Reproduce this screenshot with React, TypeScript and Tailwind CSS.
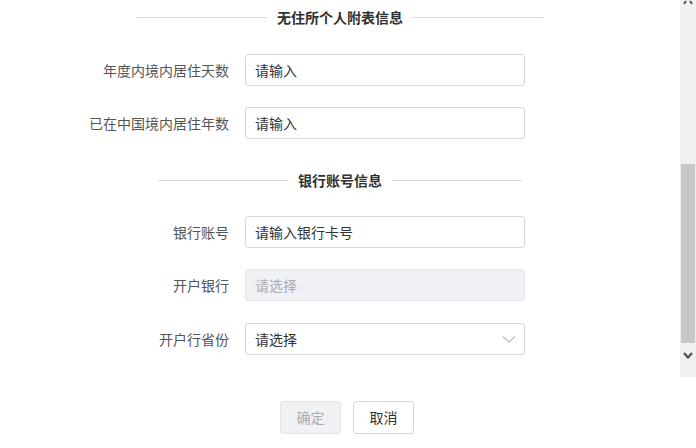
import React from 'react';

const font = { fontFamily: '"Noto Sans CJK SC", "Liberation Sans", sans-serif' };

interface SectionTitleProps {
  title: string;
  lineWidth: string;
}

const SectionTitle: React.FC<SectionTitleProps> = ({ title, lineWidth }) => (
  <div className="flex h-[34px] items-center justify-center gap-[10px]">
    <div className={`h-px ${lineWidth} bg-[#d9dae0]`} />
    <span className="text-[14px] font-bold leading-none text-[#303133]">{title}</span>
    <div className={`h-px ${lineWidth} bg-[#d9dae0]`} />
  </div>
);

interface FieldProps {
  label: string;
  value: string;
  disabled?: boolean;
  select?: boolean;
  className?: string;
}

const Field: React.FC<FieldProps> = ({ label, value, disabled, select, className }) => (
  <div className={`flex items-center ${className ?? ''}`}>
    <label className="w-[176px] pr-[16px] text-right text-[14px] leading-none text-[#555]">{label}</label>
    <div
      className={`relative flex h-[32px] w-[280px] items-center rounded-[3px] border px-[9px] text-[14px] leading-none ${
        disabled
          ? 'border-[#e4e6ec] bg-[#f0f1f5] text-[#a8abb2]'
          : 'border-[#d5d7de] bg-white text-[#333]'
      }`}
    >
      <span>{value}</span>
      {select && (
        <svg
          className="absolute right-[8px] top-[10px]"
          width="14"
          height="10"
          viewBox="0 0 14 10"
          fill="none"
        >
          <polyline points="1,2.5 7,8 13,2.5" stroke="#b8bcc6" strokeWidth="1.2" />
        </svg>
      )}
    </div>
  </div>
);

const Scrollbar: React.FC = () => (
  <div className="flex h-[377px] w-[16px] flex-col bg-[#f0f0f0]">
    <div className="flex h-[4px] justify-center overflow-hidden">
      <svg width="10" height="4" viewBox="0 0 10 4">
        <polyline points="1,4 3,1" stroke="#555" strokeWidth="2" fill="none" />
        <polyline points="9,4 7,1" stroke="#555" strokeWidth="2" fill="none" />
      </svg>
    </div>
    <div className="h-[160px]" />
    <div className="mx-[1px] h-[179px] bg-[#c8c8c8]" />
    <div className="flex flex-1 items-start justify-center pt-[9px]">
      <svg width="10" height="7" viewBox="0 0 10 7">
        <polyline points="1,1 5,5.5 9,1" stroke="#505050" strokeWidth="2.2" fill="none" />
      </svg>
    </div>
  </div>
);

export default function App() {
  return (
    <div className="flex h-[448px] w-[696px] bg-white" style={font}>
      <div className="flex-1">
        <SectionTitle title="无住所个人附表信息" lineWidth="w-[130px]" />
        <div className="pl-[69px]">
          <Field label="年度内境内居住天数" value="请输入" className="mt-[20px]" />
          <Field label="已在中国境内居住年数" value="请输入" className="mt-[21px]" />
        </div>
        <div className="mt-[24px]">
          <SectionTitle title="银行账号信息" lineWidth="w-[130px]" />
        </div>
        <div className="pl-[69px]">
          <Field label="银行账号" value="请输入银行卡号" className="mt-[19px]" />
          <Field label="开户银行" value="请选择" disabled className="mt-[21px]" />
          <Field label="开户行省份" value="请选择" select className="mt-[22px]" />
        </div>
        <div className="mt-[46px] flex gap-[12px] pl-[280px]">
          <button
            disabled
            className="h-[33px] w-[61px] rounded-[3px] border border-[#e4e6ec] bg-[#f0f1f5] text-[14px] text-[#a8abb2]"
          >
            确定
          </button>
          <button className="h-[33px] w-[61px] rounded-[3px] border border-[#d5d7de] bg-white text-[14px] text-[#333]">
            取消
          </button>
        </div>
      </div>
      <Scrollbar />
    </div>
  );
}
